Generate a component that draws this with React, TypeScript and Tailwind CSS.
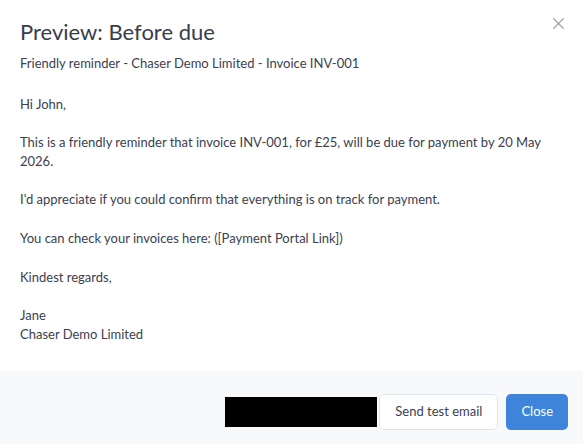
import { X } from "lucide-react";

const paragraphs = [
  ["Hi John,"],
  [
    "This is a friendly reminder that invoice INV-001, for £25, will be due for payment by 20 May 2026.",
  ],
  ["I'd appreciate if you could confirm that everything is on track for payment."],
  ["You can check your invoices here: ([Payment Portal Link])"],
  ["Kindest regards,"],
  ["Jane", "Chaser Demo Limited"],
];

export default function App() {
  return (
    <div
      className="w-[583px] h-[444px] bg-white flex flex-col text-[#3a4150] overflow-hidden"
      style={{ fontFamily: "Lato, 'Open Sans', sans-serif" }}
    >
      <div className="relative flex-1 px-5 pt-[18px]">
        <button className="absolute right-[15px] top-[14px] text-[#9ca3af]">
          <X size={19} strokeWidth={1.5} />
        </button>
        <h2 className="text-[22px] leading-[28px] text-[#363d4b]">Preview: Before due</h2>
        <p className="mt-[8px] text-[13px] leading-[18.6px]">
          Friendly reminder - Chaser Demo Limited - Invoice INV-001
        </p>
        <div className="mt-[22px] text-[13px] leading-[18.6px]">
          {paragraphs.map((lines, i) => (
            <p key={i} className="mb-5 pr-4">
              {lines.map((line, j) => (
                <span key={j} className="block">
                  {line}
                </span>
              ))}
            </p>
          ))}
        </div>
      </div>
      <div className="h-[73px] bg-[#f8f9fb] flex items-center justify-end pr-[15px] pt-[9px]">
        <div className="w-[152px] h-[30px] bg-black mr-[2px]"></div>
        <button className="h-[36px] px-[15px] bg-white border border-[#dfe3ea] rounded-[5px] text-[13px] text-[#3a4150]">
          Send test email
        </button>
        <button className="ml-2 h-[36px] px-[15px] bg-[#3e84d8] rounded-[5px] text-[13px] text-white">
          Close
        </button>
      </div>
    </div>
  );
}
